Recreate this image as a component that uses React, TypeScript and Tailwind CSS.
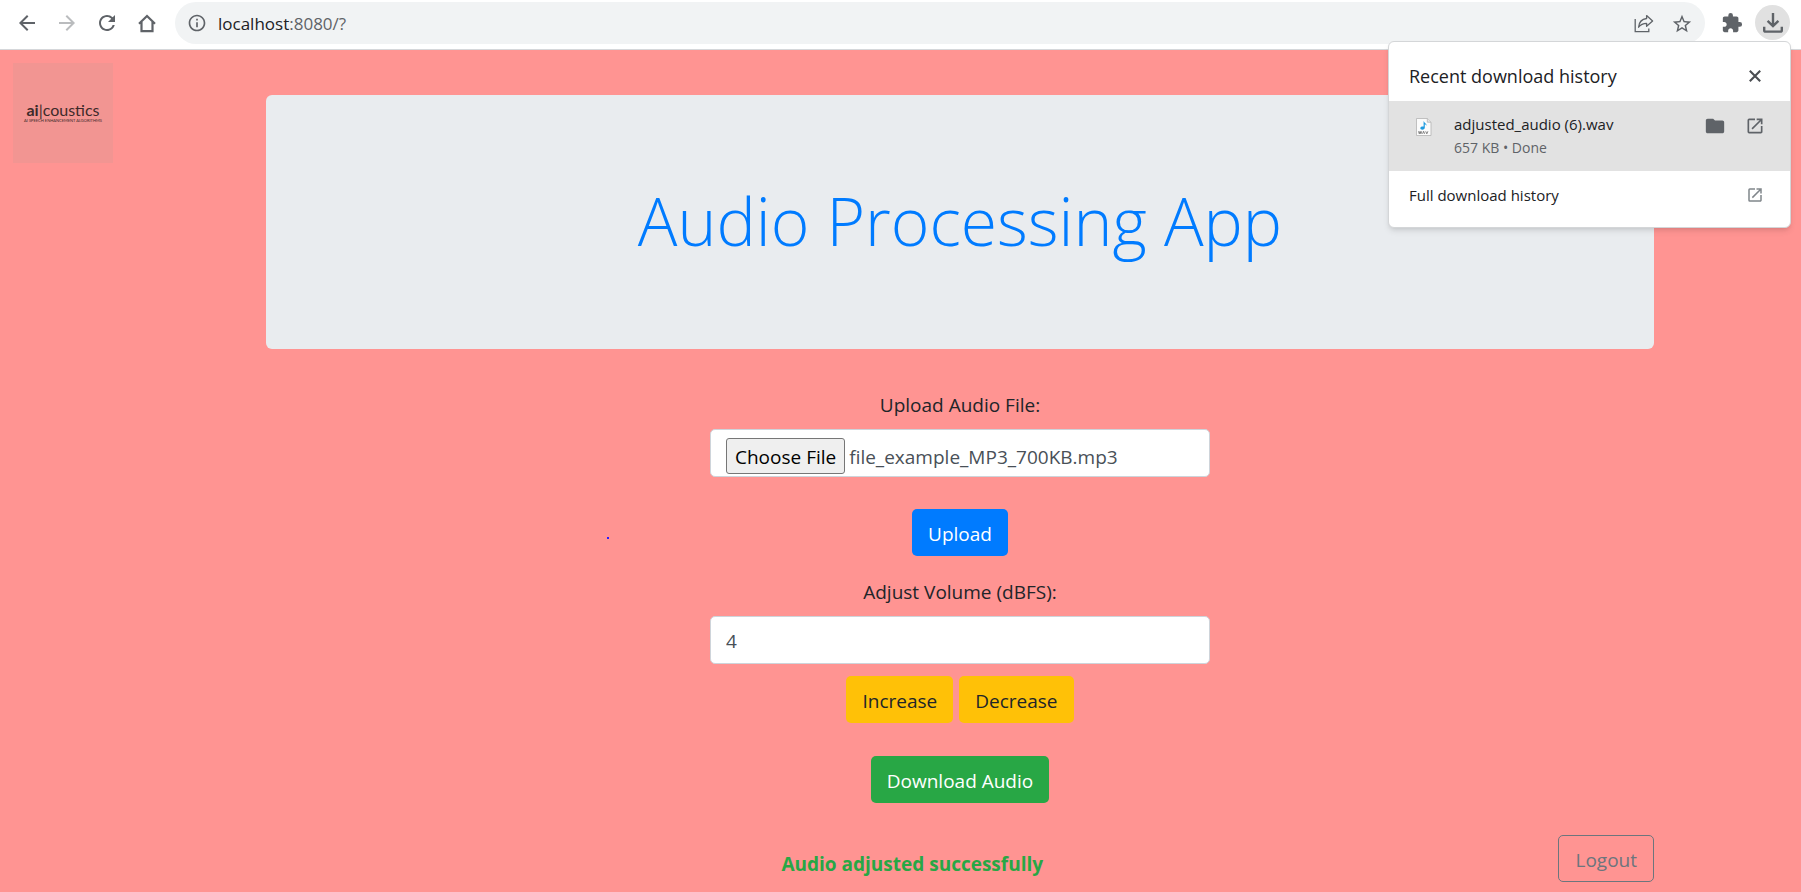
import { useEffect, useRef, useState } from "react";
import {
  MdArrowBack,
  MdArrowForward,
  MdExtension,
  MdFolder,
  MdInfoOutline,
  MdOpenInNew,
  MdRefresh,
  MdStarBorder,
} from "react-icons/md";

const field =
  "block h-12 w-full rounded-[5px] border border-[#ced4da] bg-white px-[15px] text-[19px] leading-[30px] text-[#495057]";
const button = "h-[47px] rounded-[5px] px-4 pt-[2px] text-[19px] leading-[30px]";

function HomeIcon() {
  return (
    <svg viewBox="0 0 24 24" className="size-6" fill="none" stroke="currentColor" strokeWidth="2.2" aria-hidden="true">
      <path d="M4 12.700 12 5l8 7.700M6.500 11v9.200h11V11" />
    </svg>
  );
}

function ShareIcon() {
  return (
    <svg viewBox="0 0 20 20" className="size-5" fill="none" stroke="currentColor" strokeWidth="1.3" aria-hidden="true">
      <path d="M1.200 5v12.600h13.600v-3" />
      <path d="M12.600 1.600 18.600 7l-6 5.200V9.300c-3.700 0-6 1.200-8 3.900.4-4.700 3.200-8.200 8-8.700z" strokeLinejoin="round" />
    </svg>
  );
}

function DownloadIcon() {
  return (
    <svg viewBox="0 0 20 20" className="size-5" fill="none" stroke="currentColor" strokeWidth="2.4" aria-hidden="true">
      <path d="M10 0v12.500M4.600 7.800 10 13.100l5.400-5.300" />
      <path d="M1.200 13.800v3.400q0 1.400 1.400 1.400h14.800q1.400 0 1.400-1.400v-3.400" />
    </svg>
  );
}

function CloseIcon() {
  return (
    <svg viewBox="0 0 20 20" className="size-5" fill="none" stroke="currentColor" strokeWidth="2.1" aria-hidden="true">
      <path d="m4.800 4.800 10.400 10.400M15.200 4.800 4.800 15.200" />
    </svg>
  );
}

function WavFileIcon() {
  return (
    <svg viewBox="0 0 16 18" className="h-[18px] w-4" aria-hidden="true">
      <path d="M.5.500h10.800l3.700 3.700v13.300H.5z" fill="#fbfbfb" stroke="#b4b4b4" strokeWidth=".8" />
      <path d="M11.300.5v3.700H15" fill="#e6e6e6" stroke="#b4b4b4" strokeWidth=".8" />
      <path d="M7.600 2.800c.5 2.200 3.200 2.500 3 5.200-.4-1.100-1.100-1.500-1.800-1.700v3.300c0 1.300-1 2.100-2.400 2.100-1.300 0-2.100-.7-2.100-1.600 0-1.300 1.600-2 3.300-1.600z" fill="#1e9be0" />
      <path d="m2.500 13.300.8 2.500.8-2.500.8 2.500.8-2.500M6.600 15.800l1-2.500 1 2.500M9.700 13.300l1.100 2.500 1.100-2.500" fill="none" stroke="#666" strokeWidth=".8" />
    </svg>
  );
}

function BrowserBar() {
  return (
    <header className="flex h-[50px] items-start border-b border-[#d5d7da] bg-white pt-[2px] pr-[11px] pl-[15px] text-[#5f6368]">
      <nav aria-label="Browser" className="flex h-[42px] items-center gap-4">
        <button aria-label="Back"><MdArrowBack size={24} /></button>
        <button aria-label="Forward" className="text-[#babcbe]"><MdArrowForward size={24} /></button>
        <button aria-label="Reload"><MdRefresh size={24} /></button>
        <button aria-label="Home"><HomeIcon /></button>
      </nav>
      <div className="ml-4 flex h-[42px] flex-1 items-center rounded-full bg-[#f1f3f4] pr-3 pl-3">
        <MdInfoOutline size={20} />
        <p className="ml-[11px] flex-1 pt-px text-[17px] text-[#5f6368]">
          <span className="text-[#202124]">localhost</span>:8080/?
        </p>
        <button aria-label="Share this page" className="pt-px"><ShareIcon /></button>
        <button aria-label="Bookmark this tab" className="ml-[17px] pt-px"><MdStarBorder size={22} /></button>
      </div>
      <button aria-label="Extensions" className="ml-4 flex h-[42px] items-center"><MdExtension size={22} /></button>
      <button aria-label="Downloads" className="mt-[3px] ml-3 flex size-[35px] items-center justify-center rounded-full bg-[#e1e1e1]">
        <DownloadIcon />
      </button>
    </header>
  );
}

function DownloadBubble() {
  return (
    <aside className="absolute top-[41px] right-[10px] z-10 w-[403px] rounded-md border border-[#d4d6d8] bg-white pt-[9px] pb-2 text-[#202124] shadow-md">
      <div className="flex h-[50px] items-center justify-between px-5">
        <h2 className="text-[18px]">Recent download history</h2>
        <button aria-label="Close" className="mr-[5px] text-[#4a4d51]"><CloseIcon /></button>
      </div>
      <div className="flex h-[70px] bg-[#e2e2e2] pr-[25px] pl-[27px]">
        <div className="pt-[17px]"><WavFileIcon /></div>
        <div className="flex-1 pt-[11px] pl-[22px]">
          <p className="text-[15px] leading-[24px]">adjusted_audio (6).wav</p>
          <p className="text-[14px] leading-[24px] text-[#5f6368]">657 KB • Done</p>
        </div>
        <div className="flex h-[50px] items-center gap-[19px] text-[#5f6368]">
          <button aria-label="Show in folder"><MdFolder size={22} /></button>
          <button aria-label="Open in new window"><MdOpenInNew size={20} /></button>
        </div>
      </div>
      <a href="#downloads" className="flex h-12 items-center justify-between px-5 text-[15px]">
        Full download history
        <MdOpenInNew size={18} className="mr-[6px] text-[#80868b]" />
      </a>
    </aside>
  );
}

function Logo() {
  return (
    <div className="mt-[13px] ml-[13px] flex size-[100px] flex-col items-center justify-center bg-[#f29592] font-['Lato',sans-serif] text-[#3d2a2a]">
      <p className="text-[16px] leading-[16px]"><b>ai</b>|coustics</p>
      <p className="text-[4px] leading-[6px] whitespace-nowrap">AI SPEECH ENHANCEMENT ALGORITHMS</p>
    </div>
  );
}

export default function App() {
  const fileInput = useRef<HTMLInputElement>(null);
  const [volume, setVolume] = useState(4);

  useEffect(() => {
    const files = new DataTransfer();
    files.items.add(new File([""], "file_example_MP3_700KB.mp3", { type: "audio/mpeg" }));
    if (fileInput.current) fileInput.current.files = files.files;
  }, []);

  return (
    <div className="relative flex min-h-screen flex-col bg-[#ff9492] font-['Open_Sans','Noto_Sans',sans-serif] text-[#212529]">
      <BrowserBar />
      <DownloadBubble />
      <span className="absolute top-[537px] left-[607px] size-[2px] bg-[#2a1cff]" />
      <div className="flex flex-1">
        <div className="w-[119px] shrink-0"><Logo /></div>
        <main className="mx-auto mt-[45px] max-w-[1388px] flex-1">
          <div className="flex h-[254px] items-center justify-center rounded-md bg-[#e9ecef] pb-1">
            <h1 className="text-[66px] leading-[84px] font-light text-[#007bff]">Audio Processing App</h1>
          </div>
          <form className="mx-auto mt-[41px] flex w-[500px] flex-col items-center text-[19px] leading-[30px]" onSubmit={(e) => e.preventDefault()}>
            <label htmlFor="audio">Upload Audio File:</label>
            <input
              id="audio"
              ref={fileInput}
              type="file"
              className={`${field} mt-[9px] overflow-hidden pt-2 file:h-9 file:rounded-[3px] file:border file:border-solid file:border-[#767676] file:bg-[#efefef] file:px-2 file:pt-[2px] file:text-black`}
            />
            <button className={`${button} mt-8 bg-[#007bff] text-white`}>Upload</button>
          </form>
          <form className="mx-auto mt-[21px] flex w-[500px] flex-col items-center text-[19px] leading-[30px]" onSubmit={(e) => e.preventDefault()}>
            <label htmlFor="volume">Adjust Volume (dBFS):</label>
            <input
              id="volume"
              type="number"
              value={volume}
              onChange={(e) => setVolume(Number(e.target.value))}
              className={`${field} mt-[9px] pt-[2px]`}
            />
            <div className="mt-3 flex gap-[6px]">
              <button className={`${button} bg-[#ffc107]`}>Increase</button>
              <button className={`${button} bg-[#ffc107]`}>Decrease</button>
            </div>
            <button className={`${button} mt-[33px] bg-[#28a745] text-white`}>Download Audio</button>
          </form>
          <div className="mt-8 flex items-start">
            <p role="status" className="flex-1 pt-[14px] text-center text-[19px] leading-[30px] font-bold text-[#28a745]">
              Audio adjusted successfully
            </p>
            <button className={`${button} border border-[#6c757d] text-[#6c757d]`}>Logout</button>
          </div>
        </main>
      </div>
    </div>
  );
}
